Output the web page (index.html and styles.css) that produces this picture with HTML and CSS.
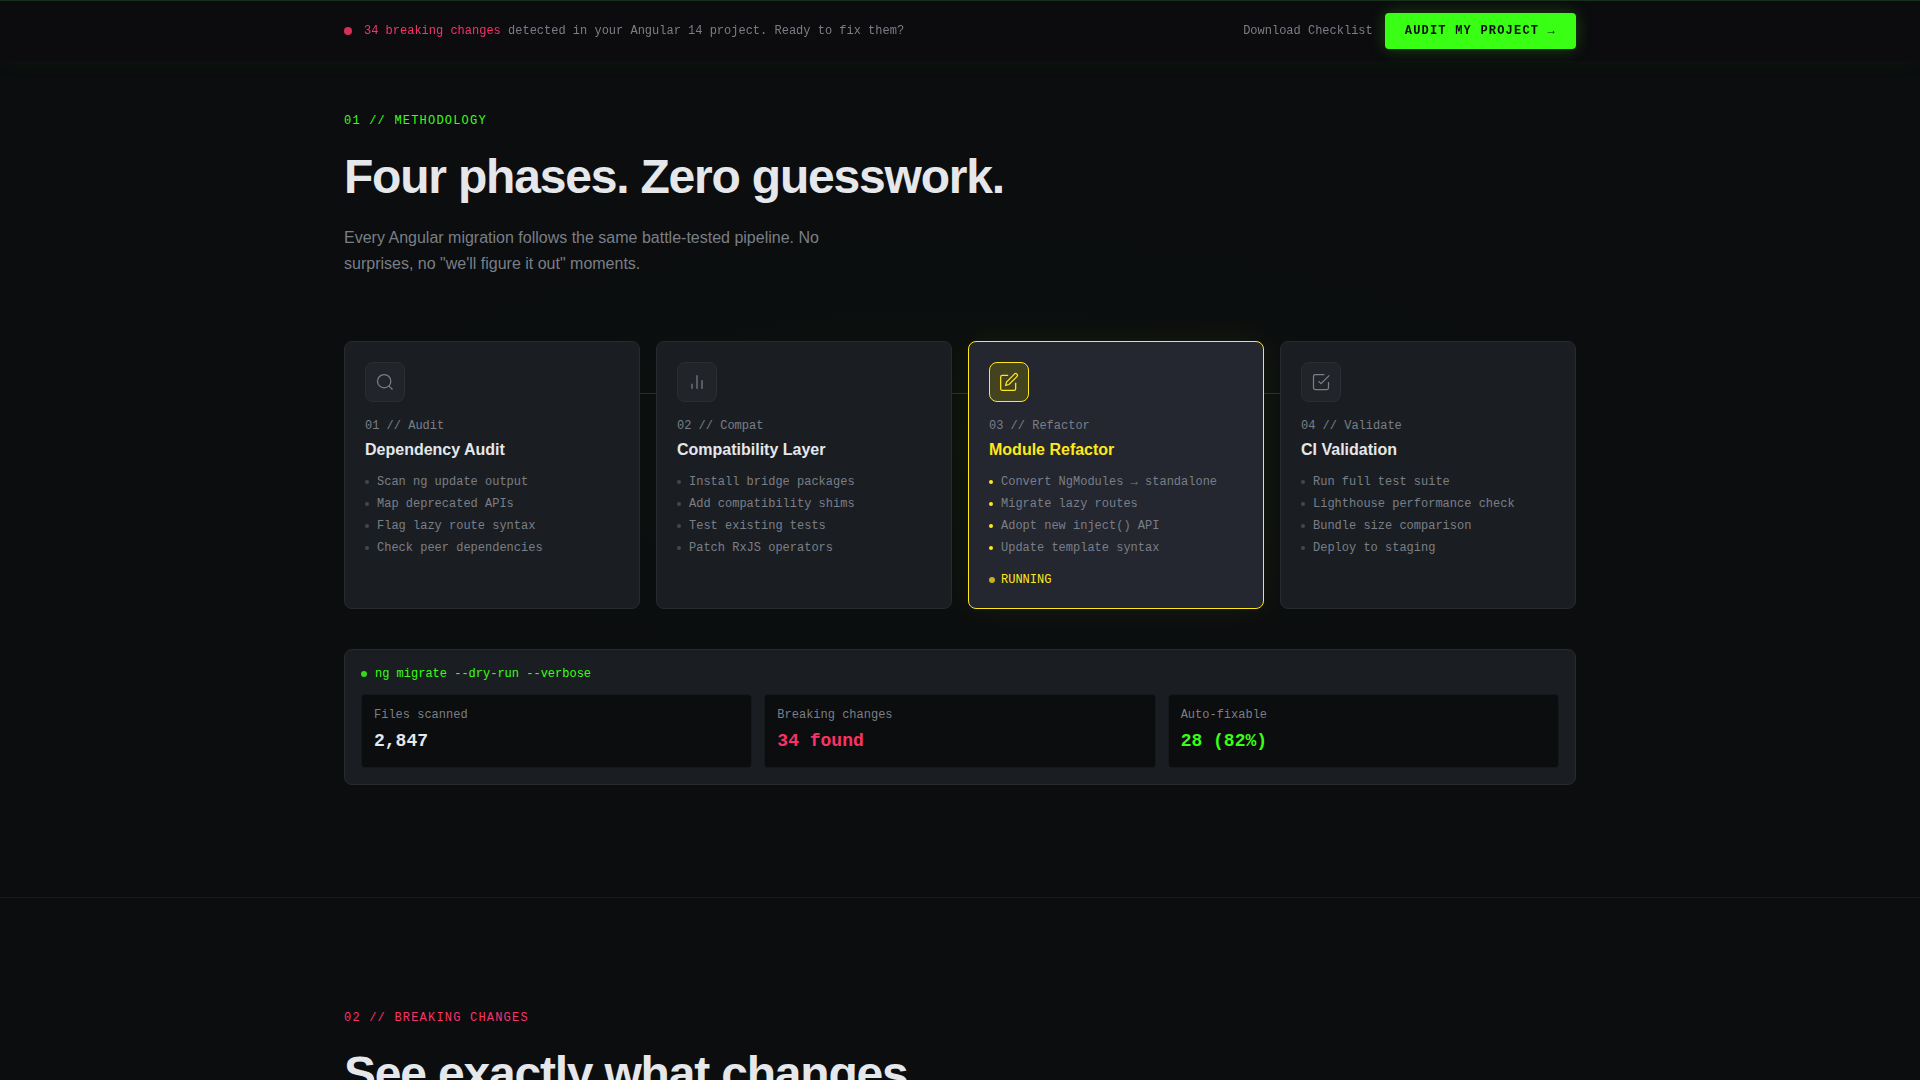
FILE: index.html
```html
<!DOCTYPE html>
<html lang="en">
<head>
    <meta charset="UTF-8">
    <meta name="viewport" content="width=device-width, initial-scale=1.0">
    <title>Angular Migration - Methodology</title>
    <link rel="stylesheet" href="styles.css">
</head>
<body>
    <!-- Sticky bar -->
    <div class="sticky-bar">
        <div class="container bar-inner">
            <p class="bar-message">
                <span class="dot dot-red"></span>
                <span><strong>34 breaking changes</strong> detected in your Angular 14 project. Ready to fix them?</span>
            </p>
            <div class="bar-actions">
                <a href="#checklist" class="bar-link">Download Checklist</a>
                <button type="button" class="btn-audit">AUDIT MY PROJECT →</button>
            </div>
        </div>
    </div>

    <main>
        <!-- Methodology -->
        <section class="section section-glow" id="methodology">
            <div class="container">
                <p class="eyebrow">01 // METHODOLOGY</p>
                <h2>Four phases. Zero guesswork.</h2>
                <p class="lead">Every Angular migration follows the same battle-tested pipeline. No surprises, no "we'll figure it out" moments.</p>

                <div class="pipeline">
                    <article class="phase">
                        <div class="phase-icon">
                            <svg viewBox="0 0 24 24"><circle cx="11" cy="11" r="8"/><path d="M21 21l-4.35-4.35"/></svg>
                        </div>
                        <p class="phase-label">01 // Audit</p>
                        <h3>Dependency Audit</h3>
                        <ul>
                            <li>Scan ng update output</li>
                            <li>Map deprecated APIs</li>
                            <li>Flag lazy route syntax</li>
                            <li>Check peer dependencies</li>
                        </ul>
                    </article>

                    <article class="phase">
                        <div class="phase-icon">
                            <svg viewBox="0 0 24 24"><path d="M18 20V10M12 20V4M6 20v-6"/></svg>
                        </div>
                        <p class="phase-label">02 // Compat</p>
                        <h3>Compatibility Layer</h3>
                        <ul>
                            <li>Install bridge packages</li>
                            <li>Add compatibility shims</li>
                            <li>Test existing tests</li>
                            <li>Patch RxJS operators</li>
                        </ul>
                    </article>

                    <article class="phase active">
                        <div class="phase-icon">
                            <svg viewBox="0 0 24 24"><path d="M11 4H4a2 2 0 0 0-2 2v14a2 2 0 0 0 2 2h14a2 2 0 0 0 2-2v-7"/><path d="M18.5 2.500a2.121 2.121 0 0 1 3 3L12 15l-4 1 1-4 9.500-9.500z"/></svg>
                        </div>
                        <p class="phase-label">03 // Refactor</p>
                        <h3>Module Refactor</h3>
                        <ul>
                            <li>Convert NgModules → standalone</li>
                            <li>Migrate lazy routes</li>
                            <li>Adopt new inject() API</li>
                            <li>Update template syntax</li>
                        </ul>
                        <p class="phase-status"><span class="dot dot-yellow"></span>RUNNING</p>
                    </article>

                    <article class="phase">
                        <div class="phase-icon">
                            <svg viewBox="0 0 24 24"><path d="M9 11l3 3L22 4"/><path d="M21 12v7a2 2 0 0 1-2 2H5a2 2 0 0 1-2-2V5a2 2 0 0 1 2-2h11"/></svg>
                        </div>
                        <p class="phase-label">04 // Validate</p>
                        <h3>CI Validation</h3>
                        <ul>
                            <li>Run full test suite</li>
                            <li>Lighthouse performance check</li>
                            <li>Bundle size comparison</li>
                            <li>Deploy to staging</li>
                        </ul>
                    </article>
                </div>

                <div class="terminal">
                    <p class="terminal-cmd"><span class="dot dot-green"></span>ng migrate --dry-run --verbose</p>
                    <dl class="stats">
                        <div class="stat">
                            <dt>Files scanned</dt>
                            <dd>2,847</dd>
                        </div>
                        <div class="stat stat-red">
                            <dt>Breaking changes</dt>
                            <dd>34 found</dd>
                        </div>
                        <div class="stat stat-green">
                            <dt>Auto-fixable</dt>
                            <dd>28 (82%)</dd>
                        </div>
                    </dl>
                </div>
            </div>
        </section>

        <!-- Breaking changes -->
        <section class="section" id="breaking-changes">
            <div class="container">
                <p class="eyebrow eyebrow-red">02 // BREAKING CHANGES</p>
                <h2>See exactly what changes</h2>
            </div>
        </section>
    </main>
</body>
</html>
```

FILE: styles.css
```css
:root {
    --bg: #0b0d0e;
    --surface: #1a1e22;
    --surface-active: #242630;
    --border: #282b2e;
    --text: #e5e7eb;
    --muted: #7a7f87;
    --green: #39ff14;
    --red: #f9336a;
    --yellow: #ffe81a;
    --mono: "Liberation Mono", "Courier New", monospace;
}

* {
    margin: 0;
    padding: 0;
    box-sizing: border-box;
}

body {
    font-family: "Liberation Sans", Arial, sans-serif;
    font-size: 16px;
    color: var(--text);
    background-color: var(--bg);
}

.container {
    max-width: 1280px;
    margin: 0 auto;
    padding: 0 24px;
}

.dot {
    flex: none;
    width: 6px;
    height: 6px;
    border-radius: 50%;
}

.dot-red {
    width: 8px;
    height: 8px;
    background-color: #d92d59;
}

.dot-yellow {
    background-color: #c4b022;
}

.dot-green {
    background-color: #36d81b;
}

/* Sticky bar */
.sticky-bar {
    position: fixed;
    top: 0;
    left: 0;
    right: 0;
    z-index: 10;
    padding: 12px 0;
    background-color: #0c0b0e;
    border-top: 1px solid #17301b;
    box-shadow: 0 0 24px rgba(57, 255, 20, 0.05);
}

.bar-inner {
    display: flex;
    align-items: center;
    justify-content: space-between;
}

.bar-message {
    display: flex;
    align-items: center;
    gap: 12px;
    font-family: var(--mono);
    font-size: 12px;
    color: var(--muted);
}

.bar-message strong {
    font-weight: 400;
    color: var(--red);
}

.bar-actions {
    display: flex;
    align-items: center;
    gap: 12px;
}

.bar-link {
    font-family: var(--mono);
    font-size: 12px;
    color: var(--muted);
    text-decoration: none;
}

.btn-audit {
    padding: 0 20px;
    font-family: var(--mono);
    font-size: 12px;
    font-weight: 700;
    line-height: 36px;
    letter-spacing: 0.1em;
    color: #0b0d0e;
    background-color: var(--green);
    border: none;
    border-radius: 4px;
    box-shadow: 0 0 16px rgba(57, 255, 20, 0.25);
    cursor: pointer;
}

/* Sections */
.section {
    padding: 112px 0;
    border-top: 1px solid #17191b;
}

.section-glow {
    background-image: radial-gradient(ellipse 40% 30% at center, rgba(57, 255, 20, 0.015), transparent);
}

.eyebrow {
    margin-bottom: 20px;
    font-family: var(--mono);
    font-size: 12px;
    line-height: 16px;
    letter-spacing: 0.1em;
    color: var(--green);
}

.eyebrow-red {
    color: var(--red);
}

h2 {
    margin-bottom: 20px;
    font-size: 48px;
    line-height: 56px;
    letter-spacing: -0.025em;
}

.lead {
    max-width: 520px;
    line-height: 26px;
    color: var(--muted);
}

/* Pipeline */
.pipeline {
    position: relative;
    display: grid;
    grid-template-columns: repeat(4, 1fr);
    gap: 16px;
    margin-top: 64px;
}

.pipeline::before {
    content: "";
    position: absolute;
    top: 52px;
    left: 0;
    right: 0;
    height: 1px;
    background-color: #2b2e2f;
}

.phase {
    position: relative;
    padding: 20px;
    background-color: var(--surface);
    border: 1px solid var(--border);
    border-radius: 8px;
}

.phase-icon {
    display: flex;
    align-items: center;
    justify-content: center;
    width: 40px;
    height: 40px;
    margin-bottom: 16px;
    color: var(--muted);
    background-color: #212428;
    border: 1px solid #2b2e32;
    border-radius: 8px;
}

.phase-icon svg {
    width: 20px;
    height: 20px;
    fill: none;
    stroke: currentColor;
    stroke-width: 1.5;
}

.phase-label {
    margin-bottom: 6px;
    font-family: var(--mono);
    font-size: 12px;
    line-height: 16px;
    color: var(--muted);
}

.phase h3 {
    margin-bottom: 12px;
    font-size: 16px;
    line-height: 20px;
}

.phase ul {
    display: grid;
    gap: 2px;
    list-style: none;
}

.phase li {
    display: flex;
    align-items: center;
    gap: 8px;
    font-family: var(--mono);
    font-size: 12px;
    line-height: 20px;
    color: var(--muted);
}

.phase li::before {
    content: "";
    width: 4px;
    height: 4px;
    border-radius: 50%;
    background-color: #44474c;
}

.phase-status {
    display: flex;
    align-items: center;
    gap: 6px;
    margin-top: 14px;
    font-family: var(--mono);
    font-size: 12px;
    line-height: 16px;
    color: var(--yellow);
}

.phase.active {
    background-color: var(--surface-active);
    border-color: var(--yellow);
    box-shadow: 0 0 32px rgba(255, 230, 32, 0.06);
}

.phase.active h3 {
    color: var(--yellow);
}

.phase.active .phase-icon {
    color: var(--yellow);
    background-color: #43431f;
    border-color: var(--yellow);
}

.phase.active li::before {
    background-color: var(--yellow);
}

/* Terminal */
.terminal {
    margin-top: 40px;
    padding: 16px;
    font-family: var(--mono);
    font-size: 12px;
    background-color: var(--surface);
    border: 1px solid var(--border);
    border-radius: 8px;
}

.terminal-cmd {
    display: flex;
    align-items: center;
    gap: 8px;
    margin-bottom: 12px;
    line-height: 16px;
    color: var(--green);
}

.stats {
    display: grid;
    grid-template-columns: repeat(3, 1fr);
    gap: 12px;
}

.stat {
    padding: 12px;
    background-color: var(--bg);
    border: 1px solid #16191b;
    border-radius: 4px;
}

.stat dt {
    margin-bottom: 4px;
    line-height: 16px;
    color: var(--muted);
}

.stat dd {
    font-size: 18px;
    font-weight: 700;
    line-height: 28px;
}

.stat-red dd {
    color: var(--red);
}

.stat-green dd {
    color: var(--green);
}
```
